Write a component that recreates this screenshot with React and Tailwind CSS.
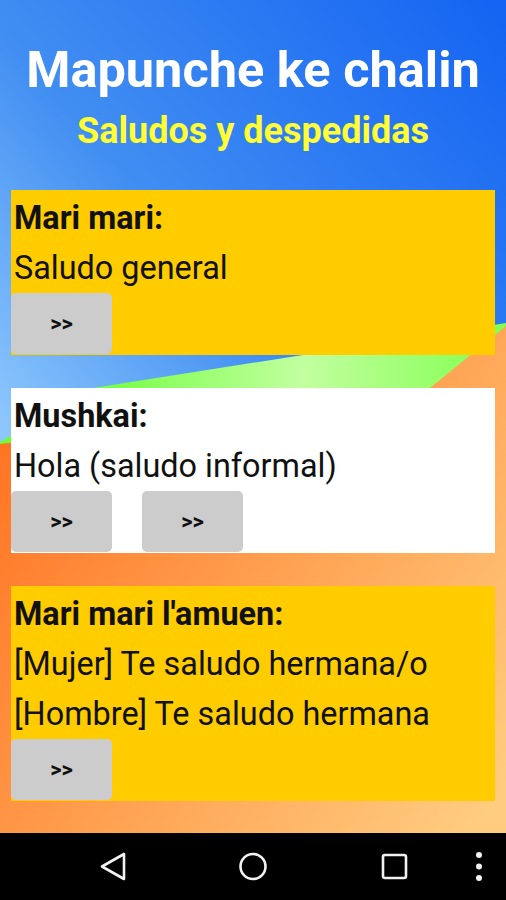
// Pantalla "Saludos y despedidas": fondo con figuras, tarjetas con frase + botones >>.

const frases = [
  { id: 1, titulo: "Mari mari:", lineas: ["Saludo general"], botones: 1, fondo: "bg-[#ffcc00]" },
  { id: 2, titulo: "Mushkai:", lineas: ["Hola (saludo informal)"], botones: 2, fondo: "bg-white" },
  {
    id: 3,
    titulo: "Mari mari l'amuen:",
    lineas: ["[Mujer] Te saludo hermana/o", "[Hombre] Te saludo hermana"],
    botones: 1,
    fondo: "bg-[#ffcc00]",
  },
];

function Fondo() {
  return (
    <svg
      className="absolute inset-0 h-full w-full"
      viewBox="0 0 506 833"
      preserveAspectRatio="none"
    >
      <defs>
        <linearGradient id="azul" gradientUnits="userSpaceOnUse" x1="506" y1="0" x2="0" y2="420">
          <stop offset="0" stopColor="#1463f2" />
          <stop offset="0.62" stopColor="#418ef2" />
          <stop offset="1" stopColor="#8cc6fc" />
        </linearGradient>
        <linearGradient id="verde" x1="0" y1="0" x2="1" y2="0">
          <stop offset="0.15" stopColor="#6cff38" />
          <stop offset="0.6" stopColor="#c2ffa0" />
          <stop offset="1" stopColor="#80ff4c" />
        </linearGradient>
        <linearGradient id="naranja" x1="0" y1="0.2" x2="1" y2="0.9">
          <stop offset="0" stopColor="#ff7322" />
          <stop offset="0.45" stopColor="#ff9c4c" />
          <stop offset="1" stopColor="#ffcc80" />
        </linearGradient>
      </defs>
      <rect width="506" height="833" fill="url(#azul)" />
      <polygon points="0,442 93,388 506,323 506,480 0,480" fill="url(#verde)" />
      <polygon points="0,444 430,388 506,326 506,833 0,833" fill="url(#naranja)" />
    </svg>
  );
}

function Boton() {
  return (
    <button
      type="button"
      className="h-[61px] w-[101px] rounded-[5px] bg-[#cccccc] text-[22px] font-bold leading-none text-[#111111]"
    >
      &gt;&gt;
    </button>
  );
}

function Tarjeta({ f }) {
  return (
    <div className={`${f.fondo} pt-[3px] pb-[1px]`}>
      <div className="px-[3px] text-[32.4px] leading-[50px] text-[#111111]">
        <div className="font-bold">{f.titulo}</div>
        {f.lineas.map((l) => (
          <div key={l}>{l}</div>
        ))}
      </div>
      <div className="flex gap-[30px]">
        {Array.from({ length: f.botones }).map((_, i) => (
          <Boton key={i} />
        ))}
      </div>
    </div>
  );
}

function NavBar() {
  return (
    <div className="flex h-[67px] items-center bg-black">
      <svg width="506" height="67" viewBox="0 0 506 67" fill="none" stroke="#f2f2f2" strokeWidth="2.6" strokeLinejoin="round">
        <polygon points="124,21 124,46 102,33.5" />
        <circle cx="253" cy="33.5" r="12.5" />
        <rect x="383" y="22" width="23" height="23" rx="2" />
        <g fill="#f2f2f2" stroke="none">
          <circle cx="479" cy="22" r="3" />
          <circle cx="479" cy="33.5" r="3" />
          <circle cx="479" cy="45" r="3" />
        </g>
      </svg>
    </div>
  );
}

export default function App() {
  return (
    <div className="flex h-[900px] w-[506px] flex-col overflow-hidden font-['Roboto','Noto_Sans',sans-serif]">
      <div className="relative flex-1">
        <Fondo />
        <div className="relative flex flex-col px-[11px] pt-[40px]">
          <h1 className="text-center text-[50.5px] font-bold leading-[60px] text-white">
            Mapunche ke chalin
          </h1>
          <h2 className="mt-[11px] text-center text-[36px] font-bold leading-[40px] text-[#ffff33]">
            Saludos y despedidas
          </h2>
          <div className="mt-[39px] flex flex-col gap-[33px]">
            {frases.map((f) => (
              <Tarjeta key={f.id} f={f} />
            ))}
          </div>
        </div>
      </div>
      <NavBar />
    </div>
  );
}
